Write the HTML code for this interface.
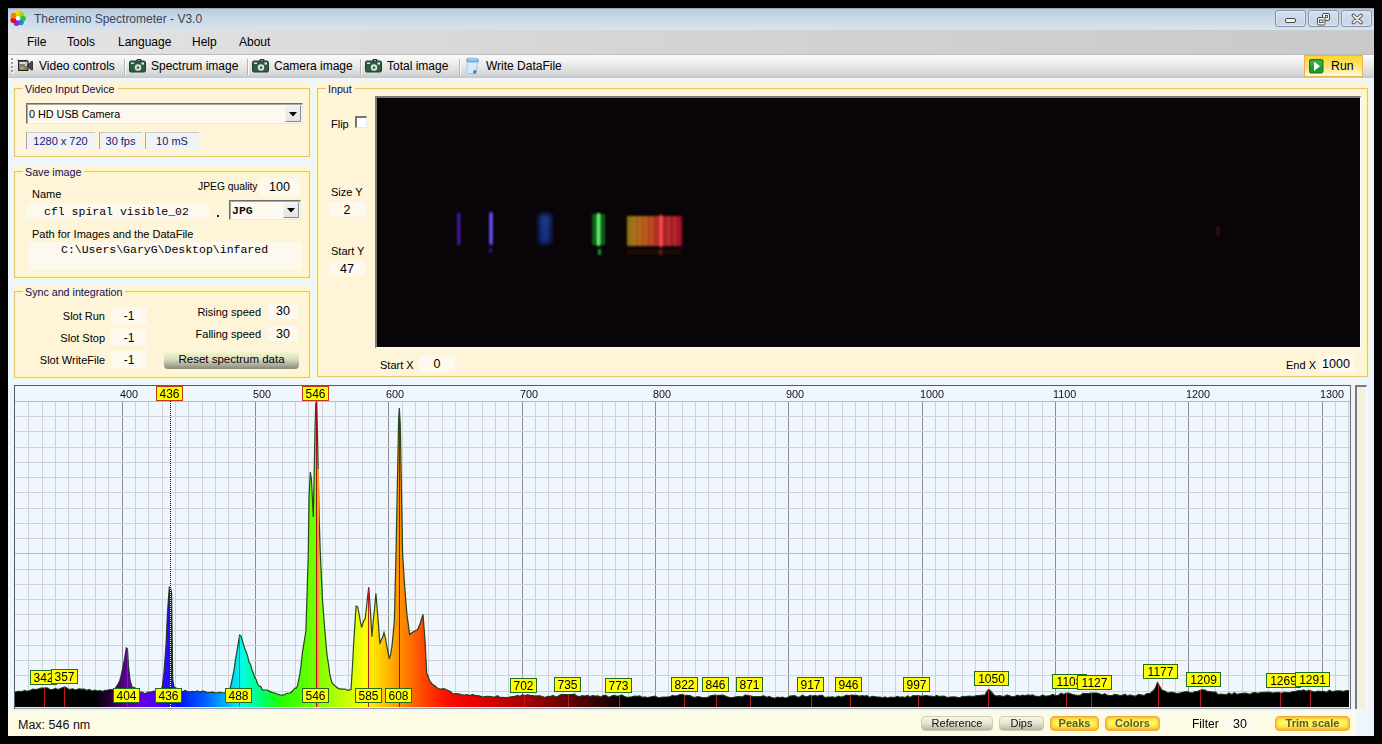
<!DOCTYPE html><html><head><meta charset="utf-8"><style>
*{margin:0;padding:0;box-sizing:border-box}
html,body{width:1382px;height:744px;overflow:hidden;background:#000}
body{position:relative;font-family:"Liberation Sans",sans-serif;font-size:12px;color:#000}
.ab{position:absolute}
.t{position:absolute;white-space:nowrap;line-height:1}
.grp{position:absolute;background:#fef4d8}
.gb{position:absolute;border:1px solid #e2c66c;box-shadow:inset 0 0 0 1px rgba(255,248,160,.7), 0 0 0 1px rgba(255,246,150,.45)}
.gl{position:absolute;background:#fef4d8;color:#100c50;font-size:10.7px;line-height:12px;padding:0 3px 0 2px;white-space:nowrap}
.box{position:absolute;background:#fdf8ea;font-size:12px;line-height:1;white-space:nowrap;text-align:center}
.lbl{position:absolute;font-size:11px;line-height:1;white-space:nowrap;color:#000}
.wb{position:absolute;top:10px;height:17px;width:31px;border:1px solid #8594a8;border-radius:3px;background:linear-gradient(#d6e1ed,#c8d6e5 60%,#ccd9e7);box-shadow:inset 0 0 0 1px rgba(255,255,255,.35)}
.tb{position:absolute;top:60px;font-size:12px;line-height:1;white-space:nowrap;color:#000}
.sep{position:absolute;top:59px;width:1px;height:16px;background:#b4b4b4;box-shadow:1px 0 0 #fff}
.btn{position:absolute;border-radius:4px;font-size:11.5px;line-height:1;text-align:center;white-space:nowrap}
</style></head><body>

<div class="ab" style="left:8px;top:8px;width:1366px;height:728px;background:#eef6fd"></div>
<div class="ab" style="left:8px;top:8px;width:1366px;height:22px;background:linear-gradient(#b9c9da,#c9d7e6 40%,#d6e3f0)"></div>
<div class="ab" style="left:8px;top:8px;width:1366px;height:1px;background:#9aa9b8"></div>
<svg class="ab" style="left:8px;top:8px" width="22" height="22" viewBox="8 8 22 22"><circle cx="17.25" cy="13.26" r="2.9" fill="#ffd800"/><circle cx="21.40" cy="14.53" r="2.9" fill="#9ae010"/><circle cx="22.99" cy="18.57" r="2.9" fill="#34c030"/><circle cx="20.82" cy="22.33" r="2.9" fill="#1a88d0"/><circle cx="16.53" cy="22.98" r="2.9" fill="#8a2ad0"/><circle cx="13.35" cy="20.03" r="2.9" fill="#e01010"/><circle cx="13.67" cy="15.70" r="2.9" fill="#ff7a00"/><circle cx="18" cy="18.2" r="2.3" fill="#f4f8ff"/></svg>
<div class="t" style="left:34px;top:13px;font-size:12px;color:#3b4554">Theremino Spectrometer - V3.0</div>
<div class="wb" style="left:1275px"><div class="ab" style="left:9px;top:7px;width:11px;height:5px;border:1px solid #4a4a4a;border-radius:2px;background:#f4f4f4"></div></div>
<div class="wb" style="left:1308px"><svg class="ab" style="left:8px;top:2px" width="14" height="13" viewBox="0 0 14 13"><rect x="5.5" y="0.5" width="7" height="7" rx="1.5" fill="#f2f2f2" stroke="#4a4a4a"/><rect x="8.5" y="2.5" width="2" height="2" fill="none" stroke="#4a4a4a" stroke-width="0.9"/><rect x="0.5" y="4.5" width="7.5" height="7.5" rx="1.5" fill="#f2f2f2" stroke="#4a4a4a"/><rect x="2.5" y="7" width="3.5" height="2.5" fill="none" stroke="#4a4a4a" stroke-width="0.9"/></svg></div>
<div class="wb" style="left:1341px"><svg class="ab" style="left:9px;top:2px" width="13" height="12" viewBox="0 0 13 12"><path d="M2.5 2.5 L10 9.5 M10 2.5 L2.5 9.5" stroke="#4a4a4a" stroke-width="3.6" stroke-linecap="round"/><path d="M2.5 2.5 L10 9.5 M10 2.5 L2.5 9.5" stroke="#f6f6f6" stroke-width="1.8" stroke-linecap="round"/></svg></div>
<div class="ab" style="left:8px;top:30px;width:1366px;height:25px;background:linear-gradient(90deg,#e4e4e4,#d6d6d6 40%,#c9c9c9);border-bottom:1px solid #bcbcbc"></div>
<div class="t" style="left:27px;top:36px;font-size:12px">File</div>
<div class="t" style="left:67px;top:36px;font-size:12px">Tools</div>
<div class="t" style="left:118px;top:36px;font-size:12px">Language</div>
<div class="t" style="left:192px;top:36px;font-size:12px">Help</div>
<div class="t" style="left:239px;top:36px;font-size:12px">About</div>
<div class="ab" style="left:8px;top:55px;width:1366px;height:23px;background:linear-gradient(#fbfbfb,#f0f0f0 30%,#d9d9d9 80%,#c6c6c6)"></div>
<div class="ab" style="left:11px;top:58px;width:2px;height:2px;background:#9a9a9a;box-shadow:1px 1px 0 #fff"></div>
<div class="ab" style="left:11px;top:62px;width:2px;height:2px;background:#9a9a9a;box-shadow:1px 1px 0 #fff"></div>
<div class="ab" style="left:11px;top:66px;width:2px;height:2px;background:#9a9a9a;box-shadow:1px 1px 0 #fff"></div>
<div class="ab" style="left:11px;top:70px;width:2px;height:2px;background:#9a9a9a;box-shadow:1px 1px 0 #fff"></div>
<svg class="ab" style="left:16px;top:58px" width="18" height="15" viewBox="0 0 18 15"><path d="M1 1.5 L2.5 3.5 L11 3.5 L11 2 L3 2 Z" fill="#2a2a2a"/><rect x="2.5" y="3" width="9.5" height="9.5" fill="#7c7c7c" stroke="#262626" stroke-width="1"/><rect x="3.5" y="4" width="7.5" height="2" fill="#d8d8d8"/><rect x="9" y="5" width="2" height="3" fill="#e8c0c0"/><rect x="4" y="9" width="5" height="2.5" fill="#8a8a3a"/><rect x="4.5" y="9.5" width="3" height="1" fill="#d8d860"/><path d="M12 6.5 L15.5 3.5 L16.5 3.5 L16.5 12 L15.5 12 L12 9 Z" fill="#4a4a4a" stroke="#1e1e1e" stroke-width="0.8"/></svg>
<div class="tb" style="left:39px">Video controls</div>
<div class="sep" style="left:124px"></div>
<svg class="ab" style="left:129px;top:58px" width="18" height="16" viewBox="0 0 18 16"><rect x="7.5" y="1" width="5" height="3" rx="1" fill="#1f3a2a"/><rect x="9" y="2" width="2" height="1" fill="#fff"/><rect x="0.5" y="3" width="16" height="11" rx="1.5" fill="#2d5e43" stroke="#1e3d2c"/><rect x="2" y="4.5" width="3" height="1.5" fill="#cfe6d8"/><rect x="12.5" y="4.5" width="2.5" height="2" fill="#e8f4ec"/><circle cx="9" cy="9.5" r="3.2" fill="#dfe7e0"/><path d="M9 7.8 L10.6 10.6 L7.4 10.6 Z" fill="#1e3d2c"/></svg>
<div class="tb" style="left:151px">Spectrum image</div>
<div class="sep" style="left:247px"></div>
<svg class="ab" style="left:252px;top:58px" width="18" height="16" viewBox="0 0 18 16"><rect x="7.5" y="1" width="5" height="3" rx="1" fill="#1f3a2a"/><rect x="9" y="2" width="2" height="1" fill="#fff"/><rect x="0.5" y="3" width="16" height="11" rx="1.5" fill="#2d5e43" stroke="#1e3d2c"/><rect x="2" y="4.5" width="3" height="1.5" fill="#cfe6d8"/><rect x="12.5" y="4.5" width="2.5" height="2" fill="#e8f4ec"/><circle cx="9" cy="9.5" r="3.2" fill="#dfe7e0"/><path d="M9 7.8 L10.6 10.6 L7.4 10.6 Z" fill="#1e3d2c"/></svg>
<div class="tb" style="left:274px">Camera image</div>
<div class="sep" style="left:360px"></div>
<svg class="ab" style="left:365px;top:58px" width="18" height="16" viewBox="0 0 18 16"><rect x="7.5" y="1" width="5" height="3" rx="1" fill="#1f3a2a"/><rect x="9" y="2" width="2" height="1" fill="#fff"/><rect x="0.5" y="3" width="16" height="11" rx="1.5" fill="#2d5e43" stroke="#1e3d2c"/><rect x="2" y="4.5" width="3" height="1.5" fill="#cfe6d8"/><rect x="12.5" y="4.5" width="2.5" height="2" fill="#e8f4ec"/><circle cx="9" cy="9.5" r="3.2" fill="#dfe7e0"/><path d="M9 7.8 L10.6 10.6 L7.4 10.6 Z" fill="#1e3d2c"/></svg>
<div class="tb" style="left:387px">Total image</div>
<div class="sep" style="left:459px"></div>
<svg class="ab" style="left:464px;top:57px" width="16" height="18" viewBox="0 0 16 18"><path d="M3.5 4 L13.5 4 Q14.5 5 13 8 L12 13 Q11.5 16 9.5 16.5 L3 16.5 Q1.5 16 2.5 14 Q3.5 11 3 8 Q2.5 5.5 3.5 4 Z" fill="#d4eafa" stroke="#8db9dc" stroke-width="0.7"/><path d="M2.5 2.5 Q3 1 5 1 L13 1.5 Q15 2 14.5 4 Q14 5.5 12.5 5 L4 5 Q2 4.5 2.5 2.5 Z" fill="#7fb7e3" stroke="#5b93c6" stroke-width="0.6"/><path d="M4 2 L13 2.5" stroke="#c6e4f8" stroke-width="1"/><path d="M9.5 13 Q12.5 12.5 13 14.5 Q12.5 17 10 17 Q8.5 16 9.5 13 Z" fill="#4f88c2"/></svg>
<div class="tb" style="left:486px">Write DataFile</div>
<div class="ab" style="left:1304px;top:55px;width:59px;height:22px;border:1px solid #e9b24a;background:linear-gradient(#ffd62a,#ffe26a 45%,#fff4c8 90%,#fffbe6)"></div>
<svg class="ab" style="left:1309px;top:59px" width="15" height="15" viewBox="0 0 15 15"><rect x="0.5" y="0.5" width="13.5" height="13.5" rx="1.5" fill="#1e9a30" stroke="#17702a"/><rect x="1.5" y="1.5" width="11.5" height="5" fill="#36b048"/><path d="M5 2.5 L11 7.2 L5 12 Z" fill="#fff"/></svg>
<div class="t" style="left:1331px;top:60px;font-size:12.3px">Run</div>
<div class="grp" style="left:14px;top:82px;width:296px;height:75px"></div>
<div class="gb" style="left:14px;top:88px;width:296px;height:69px"></div>
<div class="gl" style="left:23px;top:84px;line-height:11px">Video Input Device</div>
<div class="grp" style="left:14px;top:165px;width:296px;height:113px"></div>
<div class="gb" style="left:14px;top:171px;width:296px;height:107px"></div>
<div class="gl" style="left:23px;top:167px;line-height:11px">Save image</div>
<div class="grp" style="left:14px;top:285px;width:296px;height:93px"></div>
<div class="gb" style="left:14px;top:291px;width:296px;height:87px"></div>
<div class="gl" style="left:23px;top:287px;line-height:11px">Sync and integration</div>
<div class="grp" style="left:317px;top:82px;width:1051px;height:295px"></div>
<div class="gb" style="left:317px;top:88px;width:1051px;height:289px"></div>
<div class="gl" style="left:326px;top:84px;line-height:11px">Input</div>
<div class="ab" style="left:26px;top:103px;width:277px;height:21px;border:1px solid #6d6d6d;border-right-color:#e8e8e8;border-bottom-color:#e8e8e8;box-shadow:inset 1px 1px 0 #a8a8a8;background:#fdf9ee"></div>
<div class="t" style="left:29px;top:109.1px;font-size:10.8px;color:#000">0 HD USB Camera</div>
<div class="ab" style="left:285px;top:105px;width:16px;height:17px;border:1px solid #8a8a8a;border-top-color:#f4f4f4;border-left-color:#f4f4f4;border-radius:1px;background:linear-gradient(#f2f2f2,#e2e2e2)"></div>
<svg class="ab" style="left:289.0px;top:111.5px" width="8" height="5"><path d="M0 0 L8 0 L4 4.5 Z" fill="#000"/></svg>
<div class="ab" style="left:26px;top:132px;width:69px;height:17px;background:#f1f2f4;border-left:1px solid #a7a7a7;border-top:1px solid #c9c9c9"></div>
<div class="t" style="left:26px;top:136px;width:69px;text-align:center;font-size:11px;color:#151a72">1280 x 720</div>
<div class="ab" style="left:99px;top:132px;width:43px;height:17px;background:#f1f2f4;border-left:1px solid #a7a7a7;border-top:1px solid #c9c9c9"></div>
<div class="t" style="left:99px;top:136px;width:43px;text-align:center;font-size:11px;color:#151a72">30 fps</div>
<div class="ab" style="left:145px;top:132px;width:54px;height:17px;background:#f1f2f4;border-left:1px solid #a7a7a7;border-top:1px solid #c9c9c9"></div>
<div class="t" style="left:145px;top:136px;width:54px;text-align:center;font-size:11px;color:#151a72">10 mS</div>
<div class="lbl" style="left:32px;top:189px">Name</div>
<div class="lbl" style="left:198px;top:182px;font-size:10.3px">JPEG quality</div>
<div class="ab" style="left:259px;top:178px;width:41px;height:18px;background:#fdf9ee"></div>
<div class="t" style="left:259px;top:181.2px;width:41px;text-align:center;font-size:12.5px;">100</div>
<div class="ab" style="left:26px;top:204px;width:183px;height:15px;background:#fdf9ee"></div>
<div class="t" style="left:44px;top:206.2px;width:165px;text-align:left;font-size:11.5px;font-family:'Liberation Mono', monospace;">cfl spiral visible_02</div>
<div class="ab" style="left:216.5px;top:215px;width:2px;height:2px;background:#222"></div>
<div class="ab" style="left:229px;top:200px;width:72px;height:20px;border:1px solid #6d6d6d;border-right-color:#e8e8e8;border-bottom-color:#e8e8e8;box-shadow:inset 1px 1px 0 #a8a8a8;background:#fdf9ee"></div>
<div class="t" style="left:232px;top:205.2px;font-size:11.5px;color:#000"></div>
<div class="ab" style="left:283px;top:202px;width:16px;height:16px;border:1px solid #8a8a8a;border-top-color:#f4f4f4;border-left-color:#f4f4f4;border-radius:1px;background:linear-gradient(#f2f2f2,#e2e2e2)"></div>
<svg class="ab" style="left:287.0px;top:208.0px" width="8" height="5"><path d="M0 0 L8 0 L4 4.5 Z" fill="#000"/></svg>
<div class="t" style="left:232px;top:205px;font-family:'Liberation Mono',monospace;font-weight:bold;font-size:11.5px;color:#111">JPG</div>
<div class="lbl" style="left:32px;top:229px">Path for Images and the DataFile</div>
<div class="ab" style="left:28px;top:242px;width:274px;height:28px;background:#fdf9ee"></div>
<div class="t" style="left:28px;top:250.5px;width:274px;text-align:center;font-size:12px;"></div>
<div class="t" style="left:61px;top:244px;font-family:'Liberation Mono',monospace;font-size:11.5px">C:&#92;Users&#92;GaryG&#92;Desktop&#92;infared</div>
<div class="lbl" style="left:20px;width:85px;text-align:right;top:311px">Slot Run</div>
<div class="ab" style="left:111px;top:307px;width:36px;height:17px;background:#fdf9ee"></div>
<div class="t" style="left:111px;top:310.0px;width:36px;text-align:center;font-size:12px;">-1</div>
<div class="lbl" style="left:20px;width:85px;text-align:right;top:333px">Slot Stop</div>
<div class="ab" style="left:111px;top:329px;width:36px;height:17px;background:#fdf9ee"></div>
<div class="t" style="left:111px;top:332.0px;width:36px;text-align:center;font-size:12px;">-1</div>
<div class="lbl" style="left:20px;width:85px;text-align:right;top:355px">Slot WriteFile</div>
<div class="ab" style="left:111px;top:351px;width:36px;height:17px;background:#fdf9ee"></div>
<div class="t" style="left:111px;top:354.0px;width:36px;text-align:center;font-size:12px;">-1</div>
<div class="lbl" style="left:160px;width:101px;text-align:right;top:307px">Rising speed</div>
<div class="ab" style="left:268px;top:303px;width:30px;height:16px;background:#fdf9ee"></div>
<div class="t" style="left:268px;top:305.2px;width:30px;text-align:center;font-size:12.5px;">30</div>
<div class="lbl" style="left:160px;width:101px;text-align:right;top:329px">Falling speed</div>
<div class="ab" style="left:268px;top:326px;width:30px;height:15px;background:#fdf9ee"></div>
<div class="t" style="left:268px;top:327.8px;width:30px;text-align:center;font-size:12.5px;">30</div>
<div class="btn" style="left:164px;top:351px;width:135px;height:18px;background:linear-gradient(#f6fccc,#dcdcc4 45%,#8c887a);padding-top:3px;font-size:11.5px">Reset spectrum data</div>
<div class="lbl" style="left:331px;top:119px">Flip</div>
<div class="ab" style="left:355px;top:116px;width:12px;height:12px;border-top:2px solid #747474;border-left:2px solid #747474;border-right:1px solid #e8e8e8;border-bottom:1px solid #e8e8e8;background:#fff"></div>
<div class="lbl" style="left:331px;top:187px">Size Y</div>
<div class="ab" style="left:329px;top:202px;width:36px;height:15px;background:#fdf9ee"></div>
<div class="t" style="left:329px;top:203.8px;width:36px;text-align:center;font-size:12.5px;">2</div>
<div class="lbl" style="left:331px;top:246px">Start Y</div>
<div class="ab" style="left:329px;top:261px;width:36px;height:15px;background:#fdf9ee"></div>
<div class="t" style="left:329px;top:262.8px;width:36px;text-align:center;font-size:12.5px;">47</div>
<div class="lbl" style="left:380px;top:360px">Start X</div>
<div class="ab" style="left:419px;top:356px;width:36px;height:16px;background:#fdf9ee"></div>
<div class="t" style="left:419px;top:358.2px;width:36px;text-align:center;font-size:12.5px;">0</div>
<div class="lbl" style="left:1286px;top:360px">End X</div>
<div class="ab" style="left:1318px;top:356px;width:36px;height:16px;background:#fdf9ee"></div>
<div class="t" style="left:1318px;top:358.2px;width:36px;text-align:center;font-size:12.5px;">1000</div>
<div class="ab" style="left:375px;top:96px;width:986px;height:252px;background:#090407;border-top:2px solid #7d7a70;border-left:2px solid #7d7a70;border-right:1px solid #fff;border-bottom:1px solid #fff"></div>
<svg class="ab" style="left:377px;top:98px" width="983" height="249" viewBox="377 98 983 249"><defs><filter id="bl" x="-50%" y="-50%" width="200%" height="200%"><feGaussianBlur stdDeviation="1.3"/></filter><filter id="bl2" x="-50%" y="-50%" width="200%" height="200%"><feGaussianBlur stdDeviation="2.5"/></filter><linearGradient id="og" x1="626" x2="682" gradientUnits="userSpaceOnUse"><stop offset="0" stop-color="#8a7a10"/><stop offset="0.3" stop-color="#b05818"/><stop offset="0.65" stop-color="#b02028"/><stop offset="1" stop-color="#a01028"/></linearGradient><linearGradient id="bg2" x1="0" x2="0" y1="213" y2="245" gradientUnits="userSpaceOnUse"><stop offset="0" stop-color="#2050c0"/><stop offset="1" stop-color="#1838a0"/></linearGradient></defs><g filter="url(#bl)"><rect x="457.3" y="213" width="3" height="32" fill="#5020c8" opacity="0.9"/><rect x="489.3" y="212" width="3.4" height="33" fill="#5a40ff"/><rect x="490.2" y="214" width="1.6" height="29" fill="#7a68ff"/><rect x="489" y="248" width="3" height="5" fill="#2a1a80"/><rect x="598" y="249" width="3" height="6" fill="#18a030"/><rect x="659" y="249" width="3" height="6" fill="#902020" opacity="0.8"/><rect x="1216" y="226" width="4" height="10" fill="#401018" opacity="0.7"/><rect x="592" y="214" width="13" height="31" fill="#0f7a22" opacity="0.8"/><rect x="597" y="213" width="3" height="33" fill="#50ff60"/><rect x="598" y="215" width="1.2" height="29" fill="#80ff80"/><rect x="627" y="216" width="55" height="30" fill="url(#og)"/><rect x="627" y="249" width="55" height="6" fill="#502010" opacity="0.25"/><rect x="633" y="216" width="1.5" height="30" fill="#ffb060" opacity="0.25"/><rect x="639" y="216" width="1.5" height="30" fill="#ffb060" opacity="0.25"/><rect x="645" y="216" width="1.5" height="30" fill="#ffb060" opacity="0.25"/><rect x="651" y="216" width="1.5" height="30" fill="#ffb060" opacity="0.25"/><rect x="668" y="216" width="1.5" height="30" fill="#ffb060" opacity="0.25"/><rect x="674" y="216" width="1.5" height="30" fill="#ffb060" opacity="0.25"/><rect x="659.5" y="215" width="3" height="32" fill="#ff5050"/></g><rect x="539" y="214" width="12" height="30" fill="url(#bg2)" opacity="0.75" filter="url(#bl2)"/></svg>
<div class="ab" style="left:14px;top:385px;width:1337px;height:324px;background:#f0f6fd;border:1px solid #5c5c5c;border-bottom-color:#9c9c9c;border-right-color:#6c6c6c"></div>
<div class="ab" style="left:1355px;top:385px;width:12px;height:324px;background:#f3f1de;border-left:2px solid #7a7a7a;border-top:2px solid #7a7a7a;border-right:1px solid #fff"></div>
<div class="ab" style="left:8px;top:711px;width:1348px;height:25px;background:#fdfbe4"></div>
<div class="t" style="left:18px;top:719px;font-size:12.5px;color:#111">Max: 546 nm</div>
<svg class="ab" style="left:0;top:0" width="1382" height="744" viewBox="0 0 1382 744"><defs><linearGradient id="spec" x1="0" x2="1382" y1="0" y2="0" gradientUnits="userSpaceOnUse"><stop offset="0.0687" stop-color="#000000"/><stop offset="0.0796" stop-color="#2a0038"/><stop offset="0.0904" stop-color="#5a0090"/><stop offset="0.1013" stop-color="#6400d8"/><stop offset="0.1143" stop-color="#4a00ff"/><stop offset="0.1288" stop-color="#0010ff"/><stop offset="0.1483" stop-color="#0060ff"/><stop offset="0.1628" stop-color="#00b0ff"/><stop offset="0.1751" stop-color="#00ffe8"/><stop offset="0.1896" stop-color="#00ff70"/><stop offset="0.2026" stop-color="#20ff00"/><stop offset="0.2171" stop-color="#50ff00"/><stop offset="0.2388" stop-color="#a0ff00"/><stop offset="0.2569" stop-color="#e0ff00"/><stop offset="0.2648" stop-color="#ffff00"/><stop offset="0.2750" stop-color="#ffd000"/><stop offset="0.2894" stop-color="#ff9000"/><stop offset="0.3039" stop-color="#ff5000"/><stop offset="0.3220" stop-color="#ff1000"/><stop offset="0.3401" stop-color="#f00000"/><stop offset="0.3763" stop-color="#b00000"/><stop offset="0.4052" stop-color="#700000"/><stop offset="0.4342" stop-color="#300000"/><stop offset="0.4501" stop-color="#0a0000"/><stop offset="0.4559" stop-color="#000000"/></linearGradient></defs><g shape-rendering="crispEdges"><line x1="28.5" y1="401" x2="28.5" y2="707" stroke="#cdd1d6"/><line x1="42.5" y1="401" x2="42.5" y2="707" stroke="#cdd1d6"/><line x1="55.5" y1="401" x2="55.5" y2="707" stroke="#cdd1d6"/><line x1="68.5" y1="401" x2="68.5" y2="707" stroke="#cdd1d6"/><line x1="82.5" y1="401" x2="82.5" y2="707" stroke="#cdd1d6"/><line x1="95.5" y1="401" x2="95.5" y2="707" stroke="#cdd1d6"/><line x1="108.5" y1="401" x2="108.5" y2="707" stroke="#cdd1d6"/><line x1="122.5" y1="401" x2="122.5" y2="707" stroke="#8b8f95"/><line x1="135.5" y1="401" x2="135.5" y2="707" stroke="#cdd1d6"/><line x1="148.5" y1="401" x2="148.5" y2="707" stroke="#cdd1d6"/><line x1="162.5" y1="401" x2="162.5" y2="707" stroke="#cdd1d6"/><line x1="175.5" y1="401" x2="175.5" y2="707" stroke="#cdd1d6"/><line x1="188.5" y1="401" x2="188.5" y2="707" stroke="#cdd1d6"/><line x1="202.5" y1="401" x2="202.5" y2="707" stroke="#cdd1d6"/><line x1="215.5" y1="401" x2="215.5" y2="707" stroke="#cdd1d6"/><line x1="228.5" y1="401" x2="228.5" y2="707" stroke="#cdd1d6"/><line x1="242.5" y1="401" x2="242.5" y2="707" stroke="#cdd1d6"/><line x1="255.5" y1="401" x2="255.5" y2="707" stroke="#8b8f95"/><line x1="268.5" y1="401" x2="268.5" y2="707" stroke="#cdd1d6"/><line x1="282.5" y1="401" x2="282.5" y2="707" stroke="#cdd1d6"/><line x1="295.5" y1="401" x2="295.5" y2="707" stroke="#cdd1d6"/><line x1="308.5" y1="401" x2="308.5" y2="707" stroke="#cdd1d6"/><line x1="322.5" y1="401" x2="322.5" y2="707" stroke="#cdd1d6"/><line x1="335.5" y1="401" x2="335.5" y2="707" stroke="#cdd1d6"/><line x1="348.5" y1="401" x2="348.5" y2="707" stroke="#cdd1d6"/><line x1="362.5" y1="401" x2="362.5" y2="707" stroke="#cdd1d6"/><line x1="375.5" y1="401" x2="375.5" y2="707" stroke="#cdd1d6"/><line x1="388.5" y1="401" x2="388.5" y2="707" stroke="#8b8f95"/><line x1="402.5" y1="401" x2="402.5" y2="707" stroke="#cdd1d6"/><line x1="415.5" y1="401" x2="415.5" y2="707" stroke="#cdd1d6"/><line x1="428.5" y1="401" x2="428.5" y2="707" stroke="#cdd1d6"/><line x1="442.5" y1="401" x2="442.5" y2="707" stroke="#cdd1d6"/><line x1="455.5" y1="401" x2="455.5" y2="707" stroke="#cdd1d6"/><line x1="468.5" y1="401" x2="468.5" y2="707" stroke="#cdd1d6"/><line x1="482.5" y1="401" x2="482.5" y2="707" stroke="#cdd1d6"/><line x1="495.5" y1="401" x2="495.5" y2="707" stroke="#cdd1d6"/><line x1="508.5" y1="401" x2="508.5" y2="707" stroke="#cdd1d6"/><line x1="522.5" y1="401" x2="522.5" y2="707" stroke="#8b8f95"/><line x1="535.5" y1="401" x2="535.5" y2="707" stroke="#cdd1d6"/><line x1="548.5" y1="401" x2="548.5" y2="707" stroke="#cdd1d6"/><line x1="562.5" y1="401" x2="562.5" y2="707" stroke="#cdd1d6"/><line x1="575.5" y1="401" x2="575.5" y2="707" stroke="#cdd1d6"/><line x1="588.5" y1="401" x2="588.5" y2="707" stroke="#cdd1d6"/><line x1="602.5" y1="401" x2="602.5" y2="707" stroke="#cdd1d6"/><line x1="615.5" y1="401" x2="615.5" y2="707" stroke="#cdd1d6"/><line x1="628.5" y1="401" x2="628.5" y2="707" stroke="#cdd1d6"/><line x1="642.5" y1="401" x2="642.5" y2="707" stroke="#cdd1d6"/><line x1="655.5" y1="401" x2="655.5" y2="707" stroke="#8b8f95"/><line x1="668.5" y1="401" x2="668.5" y2="707" stroke="#cdd1d6"/><line x1="682.5" y1="401" x2="682.5" y2="707" stroke="#cdd1d6"/><line x1="695.5" y1="401" x2="695.5" y2="707" stroke="#cdd1d6"/><line x1="708.5" y1="401" x2="708.5" y2="707" stroke="#cdd1d6"/><line x1="722.5" y1="401" x2="722.5" y2="707" stroke="#cdd1d6"/><line x1="735.5" y1="401" x2="735.5" y2="707" stroke="#cdd1d6"/><line x1="748.5" y1="401" x2="748.5" y2="707" stroke="#cdd1d6"/><line x1="762.5" y1="401" x2="762.5" y2="707" stroke="#cdd1d6"/><line x1="775.5" y1="401" x2="775.5" y2="707" stroke="#cdd1d6"/><line x1="788.5" y1="401" x2="788.5" y2="707" stroke="#8b8f95"/><line x1="802.5" y1="401" x2="802.5" y2="707" stroke="#cdd1d6"/><line x1="815.5" y1="401" x2="815.5" y2="707" stroke="#cdd1d6"/><line x1="828.5" y1="401" x2="828.5" y2="707" stroke="#cdd1d6"/><line x1="842.5" y1="401" x2="842.5" y2="707" stroke="#cdd1d6"/><line x1="855.5" y1="401" x2="855.5" y2="707" stroke="#cdd1d6"/><line x1="868.5" y1="401" x2="868.5" y2="707" stroke="#cdd1d6"/><line x1="882.5" y1="401" x2="882.5" y2="707" stroke="#cdd1d6"/><line x1="895.5" y1="401" x2="895.5" y2="707" stroke="#cdd1d6"/><line x1="908.5" y1="401" x2="908.5" y2="707" stroke="#cdd1d6"/><line x1="922.5" y1="401" x2="922.5" y2="707" stroke="#8b8f95"/><line x1="935.5" y1="401" x2="935.5" y2="707" stroke="#cdd1d6"/><line x1="948.5" y1="401" x2="948.5" y2="707" stroke="#cdd1d6"/><line x1="962.5" y1="401" x2="962.5" y2="707" stroke="#cdd1d6"/><line x1="975.5" y1="401" x2="975.5" y2="707" stroke="#cdd1d6"/><line x1="988.5" y1="401" x2="988.5" y2="707" stroke="#cdd1d6"/><line x1="1002.5" y1="401" x2="1002.5" y2="707" stroke="#cdd1d6"/><line x1="1015.5" y1="401" x2="1015.5" y2="707" stroke="#cdd1d6"/><line x1="1028.5" y1="401" x2="1028.5" y2="707" stroke="#cdd1d6"/><line x1="1042.5" y1="401" x2="1042.5" y2="707" stroke="#cdd1d6"/><line x1="1055.5" y1="401" x2="1055.5" y2="707" stroke="#8b8f95"/><line x1="1068.5" y1="401" x2="1068.5" y2="707" stroke="#cdd1d6"/><line x1="1082.5" y1="401" x2="1082.5" y2="707" stroke="#cdd1d6"/><line x1="1095.5" y1="401" x2="1095.5" y2="707" stroke="#cdd1d6"/><line x1="1108.5" y1="401" x2="1108.5" y2="707" stroke="#cdd1d6"/><line x1="1122.5" y1="401" x2="1122.5" y2="707" stroke="#cdd1d6"/><line x1="1135.5" y1="401" x2="1135.5" y2="707" stroke="#cdd1d6"/><line x1="1148.5" y1="401" x2="1148.5" y2="707" stroke="#cdd1d6"/><line x1="1162.5" y1="401" x2="1162.5" y2="707" stroke="#cdd1d6"/><line x1="1175.5" y1="401" x2="1175.5" y2="707" stroke="#cdd1d6"/><line x1="1188.5" y1="401" x2="1188.5" y2="707" stroke="#8b8f95"/><line x1="1202.5" y1="401" x2="1202.5" y2="707" stroke="#cdd1d6"/><line x1="1215.5" y1="401" x2="1215.5" y2="707" stroke="#cdd1d6"/><line x1="1228.5" y1="401" x2="1228.5" y2="707" stroke="#cdd1d6"/><line x1="1242.5" y1="401" x2="1242.5" y2="707" stroke="#cdd1d6"/><line x1="1255.5" y1="401" x2="1255.5" y2="707" stroke="#cdd1d6"/><line x1="1268.5" y1="401" x2="1268.5" y2="707" stroke="#cdd1d6"/><line x1="1282.5" y1="401" x2="1282.5" y2="707" stroke="#cdd1d6"/><line x1="1295.5" y1="401" x2="1295.5" y2="707" stroke="#cdd1d6"/><line x1="1308.5" y1="401" x2="1308.5" y2="707" stroke="#cdd1d6"/><line x1="1322.5" y1="401" x2="1322.5" y2="707" stroke="#8b8f95"/><line x1="1335.5" y1="401" x2="1335.5" y2="707" stroke="#cdd1d6"/><line x1="1348.5" y1="401" x2="1348.5" y2="707" stroke="#cdd1d6"/><line x1="15" y1="416.5" x2="1350" y2="416.5" stroke="#cfd3d8"/><line x1="15" y1="431.5" x2="1350" y2="431.5" stroke="#cfd3d8"/><line x1="15" y1="447.5" x2="1350" y2="447.5" stroke="#cfd3d8"/><line x1="15" y1="462.5" x2="1350" y2="462.5" stroke="#cfd3d8"/><line x1="15" y1="477.5" x2="1350" y2="477.5" stroke="#cfd3d8"/><line x1="15" y1="492.5" x2="1350" y2="492.5" stroke="#cfd3d8"/><line x1="15" y1="508.5" x2="1350" y2="508.5" stroke="#cfd3d8"/><line x1="15" y1="523.5" x2="1350" y2="523.5" stroke="#cfd3d8"/><line x1="15" y1="538.5" x2="1350" y2="538.5" stroke="#cfd3d8"/><line x1="15" y1="553.5" x2="1350" y2="553.5" stroke="#a8ca8c"/><line x1="15" y1="569.5" x2="1350" y2="569.5" stroke="#cfd3d8"/><line x1="15" y1="584.5" x2="1350" y2="584.5" stroke="#cfd3d8"/><line x1="15" y1="599.5" x2="1350" y2="599.5" stroke="#cfd3d8"/><line x1="15" y1="614.5" x2="1350" y2="614.5" stroke="#cfd3d8"/><line x1="15" y1="630.5" x2="1350" y2="630.5" stroke="#cfd3d8"/><line x1="15" y1="645.5" x2="1350" y2="645.5" stroke="#cfd3d8"/><line x1="15" y1="660.5" x2="1350" y2="660.5" stroke="#cfd3d8"/><line x1="15" y1="675.5" x2="1350" y2="675.5" stroke="#cfd3d8"/><line x1="15" y1="691.5" x2="1350" y2="691.5" stroke="#cfd3d8"/><line x1="15" y1="401.5" x2="1350" y2="401.5" stroke="#a8ca8c"/></g><text x="120" y="398" font-family="Liberation Sans" font-size="10.8" fill="#111">400</text><text x="253" y="398" font-family="Liberation Sans" font-size="10.8" fill="#111">500</text><text x="386" y="398" font-family="Liberation Sans" font-size="10.8" fill="#111">600</text><text x="520" y="398" font-family="Liberation Sans" font-size="10.8" fill="#111">700</text><text x="653" y="398" font-family="Liberation Sans" font-size="10.8" fill="#111">800</text><text x="786" y="398" font-family="Liberation Sans" font-size="10.8" fill="#111">900</text><text x="920" y="398" font-family="Liberation Sans" font-size="10.8" fill="#111">1000</text><text x="1053" y="398" font-family="Liberation Sans" font-size="10.8" fill="#111">1100</text><text x="1186" y="398" font-family="Liberation Sans" font-size="10.8" fill="#111">1200</text><text x="1320" y="398" font-family="Liberation Sans" font-size="10.8" fill="#111">1300</text><path d="M15 707 L15.0 692.0 L18.5 691.4 L22.0 691.5 L24.7 690.4 L27.3 691.2 L30.0 690.5 L32.7 689.1 L35.3 689.6 L38.0 689.0 L41.0 688.2 L44.0 688.0 L47.0 687.8 L50.0 689.5 L52.7 689.5 L55.3 688.5 L58.0 689.5 L61.5 688.1 L65.0 687.0 L69.0 689.5 L72.5 688.8 L76.0 690.0 L78.7 688.8 L81.3 689.2 L84.0 689.0 L86.7 690.4 L89.3 689.5 L92.0 691.0 L94.7 690.2 L97.3 690.9 L100.0 690.5 L102.7 691.3 L105.3 690.3 L108.0 690.0 L110.5 689.5 L113.0 689.5 L115.5 688.0 L118.0 684.0 L119.5 681.4 L121.0 676.0 L123.0 667.0 L125.0 656.0 L126.3 648.0 L127.5 649.0 L128.5 666.0 L130.0 680.0 L132.0 687.0 L134.5 687.5 L137.0 690.0 L139.7 692.1 L142.3 692.2 L145.0 694.0 L147.9 692.2 L150.8 692.0 L153.9 691.2 L157.0 692.0 L160.0 691.0 L162.2 687.0 L164.0 672.0 L166.0 645.0 L167.5 612.0 L169.3 587.0 L170.5 587.5 L171.6 593.0 L172.2 640.0 L172.7 679.0 L174.0 687.0 L177.0 688.6 L180.0 691.0 L182.5 691.8 L185.0 690.5 L187.5 691.6 L190.0 691.8 L192.5 691.3 L195.0 691.9 L197.5 690.9 L200.0 692.0 L202.6 691.1 L205.1 691.6 L207.7 692.7 L210.2 692.3 L212.8 692.1 L215.3 692.9 L217.9 692.7 L220.4 692.4 L223.0 693.0 L226.0 692.6 L229.0 691.0 L230.5 687.0 L232.2 679.1 L234.0 670.0 L235.5 659.7 L237.0 651.0 L238.3 643.2 L239.6 635.0 L241.0 636.0 L242.3 640.1 L243.6 645.1 L244.9 648.7 L246.2 652.0 L247.6 655.9 L249.1 662.4 L250.6 664.4 L252.0 670.0 L253.4 673.3 L254.8 677.8 L256.2 679.5 L257.6 684.0 L259.2 686.0 L260.8 686.6 L262.4 690.0 L267.0 690.0 L269.7 691.4 L272.3 692.6 L275.0 693.0 L277.6 694.2 L280.3 695.0 L283.5 695.2 L286.8 693.3 L290.0 693.0 L291.2 692.4 L292.5 690.9 L293.7 689.7 L294.9 688.2 L296.2 688.2 L297.4 686.0 L299.7 675.0 L301.1 664.8 L302.5 652.0 L304.2 641.4 L305.9 631.0 L307.1 592.5 L308.3 553.0 L309.0 498.0 L310.3 472.0 L311.5 480.0 L313.3 517.0 L315.0 430.0 L315.8 403.0 L316.8 403.0 L318.2 468.0 L319.2 520.0 L320.3 553.0 L322.5 600.0 L324.9 631.0 L327.0 655.0 L328.4 663.7 L329.9 675.0 L332.0 683.0 L335.3 686.2 L338.6 688.6 L341.8 689.1 L345.0 689.0 L348.0 690.3 L351.0 689.5 L352.4 667.2 L353.7 643.0 L354.9 623.9 L356.1 606.0 L357.7 607.0 L359.0 613.5 L360.3 621.2 L361.6 627.5 L363.4 621.6 L365.2 618.5 L366.4 608.0 L367.6 596.6 L368.8 587.2 L370.4 610.8 L371.9 636.6 L373.2 620.8 L374.6 608.5 L375.9 593.3 L377.2 609.0 L378.6 626.1 L379.9 643.7 L381.3 639.7 L382.6 637.4 L384.0 632.6 L385.4 637.9 L386.7 645.5 L388.0 652.4 L389.4 658.8 L390.7 653.6 L392.0 646.0 L394.4 620.5 L396.0 553.0 L397.3 487.5 L398.6 420.0 L399.3 408.0 L400.3 425.0 L402.6 553.0 L404.5 584.0 L405.8 600.6 L407.0 615.0 L408.3 624.1 L409.6 634.6 L413.0 632.0 L417.6 629.6 L420.0 624.0 L421.5 618.9 L423.0 614.4 L425.0 640.0 L426.7 672.9 L428.2 676.5 L429.7 681.0 L432.4 684.3 L435.0 686.0 L437.9 688.5 L440.8 689.0 L443.9 688.7 L447.0 690.0 L449.9 691.3 L452.9 694.0 L455.8 693.7 L458.6 693.9 L461.4 694.7 L464.3 695.2 L467.1 694.7 L470.0 695.5 L472.5 694.5 L475.0 695.6 L477.5 695.6 L480.0 696.1 L482.5 697.1 L485.0 696.7 L487.5 696.4 L490.0 696.5 L492.5 696.8 L495.0 697.0 L497.5 695.7 L500.0 697.6 L502.5 697.4 L505.0 697.7 L507.5 697.6 L510.0 697.0 L512.5 696.5 L515.0 696.3 L517.5 695.4 L520.0 696.3 L522.5 694.8 L525.0 695.5 L527.5 694.8 L530.0 695.4 L532.5 695.5 L535.0 696.1 L537.5 695.8 L540.0 695.9 L542.5 696.5 L545.0 697.5 L547.7 696.3 L550.3 696.5 L553.0 695.5 L555.7 697.0 L558.3 696.1 L561.0 694.7 L563.7 694.6 L566.3 694.5 L569.0 694.5 L571.6 694.5 L574.2 694.2 L576.9 696.0 L579.5 696.6 L582.1 695.7 L584.8 696.0 L587.4 695.3 L590.0 696.5 L592.6 695.6 L595.3 696.1 L597.9 695.8 L600.5 697.0 L603.2 695.5 L605.8 695.2 L608.5 697.2 L611.1 696.2 L613.7 695.3 L616.4 696.1 L619.0 696.0 L621.6 695.0 L624.2 696.2 L626.8 697.3 L629.3 697.1 L631.9 696.8 L634.5 696.0 L637.1 696.3 L639.7 695.9 L642.2 697.3 L644.8 696.9 L647.4 697.5 L650.0 697.0 L652.5 696.5 L655.0 696.2 L657.5 697.4 L660.0 697.6 L662.5 697.2 L665.0 697.0 L667.5 697.0 L670.0 696.7 L672.5 695.4 L675.0 696.0 L677.5 695.5 L680.0 694.7 L682.5 694.6 L685.0 695.5 L687.5 695.3 L690.0 695.5 L692.5 696.7 L695.0 697.5 L697.5 696.6 L700.0 697.0 L702.6 697.7 L705.1 697.6 L707.7 697.4 L710.3 695.8 L712.9 695.3 L715.4 695.1 L718.0 695.5 L720.8 695.1 L723.7 695.3 L726.5 696.5 L729.3 697.4 L732.2 697.5 L735.0 697.0 L737.6 696.7 L740.2 696.7 L742.8 696.8 L745.4 694.9 L748.0 695.5 L750.7 696.0 L753.3 696.7 L756.0 696.6 L758.7 696.7 L761.3 696.3 L764.0 695.8 L766.7 697.3 L769.3 696.5 L772.0 697.7 L774.7 698.2 L777.3 697.1 L780.0 697.5 L782.5 697.1 L785.0 698.1 L787.5 697.5 L790.0 696.1 L792.5 695.8 L795.0 695.7 L797.5 697.2 L800.0 696.8 L802.5 695.2 L805.0 696.6 L807.5 696.7 L810.0 695.5 L812.5 696.0 L815.0 695.5 L817.5 696.2 L820.0 695.4 L822.5 695.4 L825.0 697.7 L827.5 697.1 L830.0 697.0 L832.7 696.8 L835.4 697.5 L838.1 696.2 L840.9 697.0 L843.6 696.6 L846.3 695.1 L849.0 695.5 L851.6 695.1 L854.2 695.3 L856.8 695.3 L859.3 696.2 L861.9 695.6 L864.5 696.1 L867.1 695.6 L869.7 697.4 L872.2 696.3 L874.8 696.7 L877.4 697.1 L880.0 697.0 L882.5 697.9 L885.0 696.9 L887.5 698.1 L890.0 697.2 L892.5 697.3 L895.0 697.4 L897.5 696.3 L900.0 697.3 L902.5 696.8 L905.0 697.5 L907.6 696.0 L910.2 697.4 L912.8 695.6 L915.4 695.8 L918.0 695.5 L920.7 696.1 L923.3 695.9 L926.0 695.5 L928.7 696.0 L931.3 696.2 L934.0 696.9 L936.7 695.5 L939.3 696.6 L942.0 696.1 L944.7 696.3 L947.3 697.5 L950.0 697.0 L952.5 696.9 L955.0 696.9 L957.5 697.3 L960.0 697.5 L962.5 696.4 L965.0 696.6 L967.5 696.3 L970.0 696.2 L972.5 696.5 L975.0 696.0 L977.5 695.6 L980.0 695.6 L982.5 695.2 L985.0 695.0 L987.5 690.5 L989.0 689.5 L990.5 691.0 L994.0 695.0 L996.6 696.1 L999.2 695.6 L1001.8 696.1 L1004.4 696.4 L1007.0 695.0 L1009.6 695.7 L1012.2 696.7 L1014.8 696.5 L1017.4 695.1 L1020.0 696.0 L1022.5 695.1 L1025.0 695.8 L1027.5 694.9 L1030.0 695.3 L1032.5 694.9 L1035.0 696.1 L1037.5 696.3 L1040.0 696.5 L1042.5 694.9 L1045.0 696.1 L1047.5 695.9 L1050.0 695.5 L1052.8 694.3 L1055.5 695.5 L1058.3 695.3 L1061.1 693.2 L1063.8 694.4 L1066.6 693.0 L1069.4 693.4 L1072.2 694.3 L1075.0 695.0 L1077.8 695.7 L1080.6 695.1 L1083.3 693.3 L1086.1 693.5 L1088.9 693.4 L1091.7 693.0 L1094.3 693.0 L1096.9 693.0 L1099.5 693.7 L1102.2 694.9 L1104.8 693.7 L1107.4 695.3 L1110.0 695.5 L1112.5 695.3 L1115.0 694.3 L1117.5 694.9 L1120.0 695.5 L1122.5 695.2 L1125.0 694.2 L1127.5 696.1 L1130.0 695.0 L1132.8 695.7 L1135.6 696.2 L1138.4 694.4 L1141.2 694.9 L1144.0 695.5 L1147.0 693.5 L1150.0 693.5 L1154.0 690.0 L1155.7 687.2 L1157.4 682.7 L1159.5 686.0 L1161.8 690.0 L1164.9 691.0 L1168.0 693.0 L1170.9 692.0 L1173.8 692.5 L1176.7 693.5 L1179.6 693.1 L1182.5 692.3 L1185.0 691.8 L1187.5 691.7 L1190.0 692.5 L1192.5 692.9 L1195.0 691.6 L1197.5 691.4 L1200.0 690.4 L1202.5 689.8 L1205.0 690.0 L1207.5 691.6 L1210.0 691.5 L1212.7 692.0 L1215.4 691.9 L1218.1 694.5 L1220.8 694.2 L1223.5 694.4 L1226.3 694.7 L1229.0 693.0 L1231.8 694.6 L1234.5 692.7 L1237.3 694.4 L1240.0 693.5 L1242.5 693.4 L1245.1 693.1 L1247.6 693.5 L1250.2 694.3 L1252.7 692.8 L1255.2 692.5 L1257.8 693.3 L1260.3 692.6 L1262.8 692.3 L1265.4 692.4 L1267.9 692.1 L1270.5 692.4 L1273.0 693.0 L1275.8 692.5 L1278.7 692.4 L1281.5 693.3 L1284.3 692.2 L1287.2 692.6 L1290.0 692.5 L1292.7 691.5 L1295.4 691.6 L1298.1 690.5 L1300.9 690.8 L1303.6 689.9 L1306.3 691.2 L1309.0 690.4 L1312.0 691.3 L1315.0 692.0 L1318.0 691.1 L1321.0 691.5 L1323.8 691.3 L1326.6 692.3 L1329.4 690.3 L1332.2 691.8 L1335.0 691.0 L1337.8 690.8 L1340.6 690.9 L1343.4 691.6 L1346.2 690.5 L1349.0 690.7 L1349 707 Z" fill="url(#spec)"/><path d="M15.0 692.0 L18.5 691.4 L22.0 691.5 L24.7 690.4 L27.3 691.2 L30.0 690.5 L32.7 689.1 L35.3 689.6 L38.0 689.0 L41.0 688.2 L44.0 688.0 L47.0 687.8 L50.0 689.5 L52.7 689.5 L55.3 688.5 L58.0 689.5 L61.5 688.1 L65.0 687.0 L69.0 689.5 L72.5 688.8 L76.0 690.0 L78.7 688.8 L81.3 689.2 L84.0 689.0 L86.7 690.4 L89.3 689.5 L92.0 691.0 L94.7 690.2 L97.3 690.9 L100.0 690.5 L102.7 691.3 L105.3 690.3 L108.0 690.0 L110.5 689.5 L113.0 689.5 L115.5 688.0 L118.0 684.0 L119.5 681.4 L121.0 676.0 L123.0 667.0 L125.0 656.0 L126.3 648.0 L127.5 649.0 L128.5 666.0 L130.0 680.0 L132.0 687.0 L134.5 687.5 L137.0 690.0 L139.7 692.1 L142.3 692.2 L145.0 694.0 L147.9 692.2 L150.8 692.0 L153.9 691.2 L157.0 692.0 L160.0 691.0 L162.2 687.0 L164.0 672.0 L166.0 645.0 L167.5 612.0 L169.3 587.0 L170.5 587.5 L171.6 593.0 L172.2 640.0 L172.7 679.0 L174.0 687.0 L177.0 688.6 L180.0 691.0 L182.5 691.8 L185.0 690.5 L187.5 691.6 L190.0 691.8 L192.5 691.3 L195.0 691.9 L197.5 690.9 L200.0 692.0 L202.6 691.1 L205.1 691.6 L207.7 692.7 L210.2 692.3 L212.8 692.1 L215.3 692.9 L217.9 692.7 L220.4 692.4 L223.0 693.0 L226.0 692.6 L229.0 691.0 L230.5 687.0 L232.2 679.1 L234.0 670.0 L235.5 659.7 L237.0 651.0 L238.3 643.2 L239.6 635.0 L241.0 636.0 L242.3 640.1 L243.6 645.1 L244.9 648.7 L246.2 652.0 L247.6 655.9 L249.1 662.4 L250.6 664.4 L252.0 670.0 L253.4 673.3 L254.8 677.8 L256.2 679.5 L257.6 684.0 L259.2 686.0 L260.8 686.6 L262.4 690.0 L267.0 690.0 L269.7 691.4 L272.3 692.6 L275.0 693.0 L277.6 694.2 L280.3 695.0 L283.5 695.2 L286.8 693.3 L290.0 693.0 L291.2 692.4 L292.5 690.9 L293.7 689.7 L294.9 688.2 L296.2 688.2 L297.4 686.0 L299.7 675.0 L301.1 664.8 L302.5 652.0 L304.2 641.4 L305.9 631.0 L307.1 592.5 L308.3 553.0 L309.0 498.0 L310.3 472.0 L311.5 480.0 L313.3 517.0 L315.0 430.0 L315.8 403.0 L316.8 403.0 L318.2 468.0 L319.2 520.0 L320.3 553.0 L322.5 600.0 L324.9 631.0 L327.0 655.0 L328.4 663.7 L329.9 675.0 L332.0 683.0 L335.3 686.2 L338.6 688.6 L341.8 689.1 L345.0 689.0 L348.0 690.3 L351.0 689.5 L352.4 667.2 L353.7 643.0 L354.9 623.9 L356.1 606.0 L357.7 607.0 L359.0 613.5 L360.3 621.2 L361.6 627.5 L363.4 621.6 L365.2 618.5 L366.4 608.0 L367.6 596.6 L368.8 587.2 L370.4 610.8 L371.9 636.6 L373.2 620.8 L374.6 608.5 L375.9 593.3 L377.2 609.0 L378.6 626.1 L379.9 643.7 L381.3 639.7 L382.6 637.4 L384.0 632.6 L385.4 637.9 L386.7 645.5 L388.0 652.4 L389.4 658.8 L390.7 653.6 L392.0 646.0 L394.4 620.5 L396.0 553.0 L397.3 487.5 L398.6 420.0 L399.3 408.0 L400.3 425.0 L402.6 553.0 L404.5 584.0 L405.8 600.6 L407.0 615.0 L408.3 624.1 L409.6 634.6 L413.0 632.0 L417.6 629.6 L420.0 624.0 L421.5 618.9 L423.0 614.4 L425.0 640.0 L426.7 672.9 L428.2 676.5 L429.7 681.0 L432.4 684.3 L435.0 686.0 L437.9 688.5 L440.8 689.0 L443.9 688.7 L447.0 690.0 L449.9 691.3 L452.9 694.0 L455.8 693.7 L458.6 693.9 L461.4 694.7 L464.3 695.2 L467.1 694.7 L470.0 695.5 L472.5 694.5 L475.0 695.6 L477.5 695.6 L480.0 696.1 L482.5 697.1 L485.0 696.7 L487.5 696.4 L490.0 696.5 L492.5 696.8 L495.0 697.0 L497.5 695.7 L500.0 697.6 L502.5 697.4 L505.0 697.7 L507.5 697.6 L510.0 697.0 L512.5 696.5 L515.0 696.3 L517.5 695.4 L520.0 696.3 L522.5 694.8 L525.0 695.5 L527.5 694.8 L530.0 695.4 L532.5 695.5 L535.0 696.1 L537.5 695.8 L540.0 695.9 L542.5 696.5 L545.0 697.5 L547.7 696.3 L550.3 696.5 L553.0 695.5 L555.7 697.0 L558.3 696.1 L561.0 694.7 L563.7 694.6 L566.3 694.5 L569.0 694.5 L571.6 694.5 L574.2 694.2 L576.9 696.0 L579.5 696.6 L582.1 695.7 L584.8 696.0 L587.4 695.3 L590.0 696.5 L592.6 695.6 L595.3 696.1 L597.9 695.8 L600.5 697.0 L603.2 695.5 L605.8 695.2 L608.5 697.2 L611.1 696.2 L613.7 695.3 L616.4 696.1 L619.0 696.0 L621.6 695.0 L624.2 696.2 L626.8 697.3 L629.3 697.1 L631.9 696.8 L634.5 696.0 L637.1 696.3 L639.7 695.9 L642.2 697.3 L644.8 696.9 L647.4 697.5 L650.0 697.0 L652.5 696.5 L655.0 696.2 L657.5 697.4 L660.0 697.6 L662.5 697.2 L665.0 697.0 L667.5 697.0 L670.0 696.7 L672.5 695.4 L675.0 696.0 L677.5 695.5 L680.0 694.7 L682.5 694.6 L685.0 695.5 L687.5 695.3 L690.0 695.5 L692.5 696.7 L695.0 697.5 L697.5 696.6 L700.0 697.0 L702.6 697.7 L705.1 697.6 L707.7 697.4 L710.3 695.8 L712.9 695.3 L715.4 695.1 L718.0 695.5 L720.8 695.1 L723.7 695.3 L726.5 696.5 L729.3 697.4 L732.2 697.5 L735.0 697.0 L737.6 696.7 L740.2 696.7 L742.8 696.8 L745.4 694.9 L748.0 695.5 L750.7 696.0 L753.3 696.7 L756.0 696.6 L758.7 696.7 L761.3 696.3 L764.0 695.8 L766.7 697.3 L769.3 696.5 L772.0 697.7 L774.7 698.2 L777.3 697.1 L780.0 697.5 L782.5 697.1 L785.0 698.1 L787.5 697.5 L790.0 696.1 L792.5 695.8 L795.0 695.7 L797.5 697.2 L800.0 696.8 L802.5 695.2 L805.0 696.6 L807.5 696.7 L810.0 695.5 L812.5 696.0 L815.0 695.5 L817.5 696.2 L820.0 695.4 L822.5 695.4 L825.0 697.7 L827.5 697.1 L830.0 697.0 L832.7 696.8 L835.4 697.5 L838.1 696.2 L840.9 697.0 L843.6 696.6 L846.3 695.1 L849.0 695.5 L851.6 695.1 L854.2 695.3 L856.8 695.3 L859.3 696.2 L861.9 695.6 L864.5 696.1 L867.1 695.6 L869.7 697.4 L872.2 696.3 L874.8 696.7 L877.4 697.1 L880.0 697.0 L882.5 697.9 L885.0 696.9 L887.5 698.1 L890.0 697.2 L892.5 697.3 L895.0 697.4 L897.5 696.3 L900.0 697.3 L902.5 696.8 L905.0 697.5 L907.6 696.0 L910.2 697.4 L912.8 695.6 L915.4 695.8 L918.0 695.5 L920.7 696.1 L923.3 695.9 L926.0 695.5 L928.7 696.0 L931.3 696.2 L934.0 696.9 L936.7 695.5 L939.3 696.6 L942.0 696.1 L944.7 696.3 L947.3 697.5 L950.0 697.0 L952.5 696.9 L955.0 696.9 L957.5 697.3 L960.0 697.5 L962.5 696.4 L965.0 696.6 L967.5 696.3 L970.0 696.2 L972.5 696.5 L975.0 696.0 L977.5 695.6 L980.0 695.6 L982.5 695.2 L985.0 695.0 L987.5 690.5 L989.0 689.5 L990.5 691.0 L994.0 695.0 L996.6 696.1 L999.2 695.6 L1001.8 696.1 L1004.4 696.4 L1007.0 695.0 L1009.6 695.7 L1012.2 696.7 L1014.8 696.5 L1017.4 695.1 L1020.0 696.0 L1022.5 695.1 L1025.0 695.8 L1027.5 694.9 L1030.0 695.3 L1032.5 694.9 L1035.0 696.1 L1037.5 696.3 L1040.0 696.5 L1042.5 694.9 L1045.0 696.1 L1047.5 695.9 L1050.0 695.5 L1052.8 694.3 L1055.5 695.5 L1058.3 695.3 L1061.1 693.2 L1063.8 694.4 L1066.6 693.0 L1069.4 693.4 L1072.2 694.3 L1075.0 695.0 L1077.8 695.7 L1080.6 695.1 L1083.3 693.3 L1086.1 693.5 L1088.9 693.4 L1091.7 693.0 L1094.3 693.0 L1096.9 693.0 L1099.5 693.7 L1102.2 694.9 L1104.8 693.7 L1107.4 695.3 L1110.0 695.5 L1112.5 695.3 L1115.0 694.3 L1117.5 694.9 L1120.0 695.5 L1122.5 695.2 L1125.0 694.2 L1127.5 696.1 L1130.0 695.0 L1132.8 695.7 L1135.6 696.2 L1138.4 694.4 L1141.2 694.9 L1144.0 695.5 L1147.0 693.5 L1150.0 693.5 L1154.0 690.0 L1155.7 687.2 L1157.4 682.7 L1159.5 686.0 L1161.8 690.0 L1164.9 691.0 L1168.0 693.0 L1170.9 692.0 L1173.8 692.5 L1176.7 693.5 L1179.6 693.1 L1182.5 692.3 L1185.0 691.8 L1187.5 691.7 L1190.0 692.5 L1192.5 692.9 L1195.0 691.6 L1197.5 691.4 L1200.0 690.4 L1202.5 689.8 L1205.0 690.0 L1207.5 691.6 L1210.0 691.5 L1212.7 692.0 L1215.4 691.9 L1218.1 694.5 L1220.8 694.2 L1223.5 694.4 L1226.3 694.7 L1229.0 693.0 L1231.8 694.6 L1234.5 692.7 L1237.3 694.4 L1240.0 693.5 L1242.5 693.4 L1245.1 693.1 L1247.6 693.5 L1250.2 694.3 L1252.7 692.8 L1255.2 692.5 L1257.8 693.3 L1260.3 692.6 L1262.8 692.3 L1265.4 692.4 L1267.9 692.1 L1270.5 692.4 L1273.0 693.0 L1275.8 692.5 L1278.7 692.4 L1281.5 693.3 L1284.3 692.2 L1287.2 692.6 L1290.0 692.5 L1292.7 691.5 L1295.4 691.6 L1298.1 690.5 L1300.9 690.8 L1303.6 689.9 L1306.3 691.2 L1309.0 690.4 L1312.0 691.3 L1315.0 692.0 L1318.0 691.1 L1321.0 691.5 L1323.8 691.3 L1326.6 692.3 L1329.4 690.3 L1332.2 691.8 L1335.0 691.0 L1337.8 690.8 L1340.6 690.9 L1343.4 691.6 L1346.2 690.5 L1349.0 690.7" fill="none" stroke="#123612" stroke-width="1.2" stroke-opacity="0.9"/><rect x="317" y="469" width="2" height="238" fill="#f0a020"/><line x1="44.5" y1="687.9" x2="44.5" y2="707" stroke="#b81c1c" stroke-width="1"/><line x1="64.5" y1="687.0" x2="64.5" y2="707" stroke="#b81c1c" stroke-width="1"/><line x1="127.5" y1="648.2" x2="127.5" y2="707" stroke="#b81c1c" stroke-width="1"/><line x1="316.5" y1="401.0" x2="316.5" y2="707" stroke="#a01010" stroke-width="1"/><line x1="368.5" y1="589.6" x2="368.5" y2="707" stroke="#b81c1c" stroke-width="1"/><line x1="399.5" y1="408.0" x2="399.5" y2="707" stroke="#a01010" stroke-width="1"/><line x1="524.5" y1="694.9" x2="524.5" y2="707" stroke="#b81c1c" stroke-width="1"/><line x1="568.5" y1="694.5" x2="568.5" y2="707" stroke="#b81c1c" stroke-width="1"/><line x1="619.5" y1="695.3" x2="619.5" y2="707" stroke="#b81c1c" stroke-width="1"/><line x1="684.5" y1="694.8" x2="684.5" y2="707" stroke="#b81c1c" stroke-width="1"/><line x1="716.5" y1="695.1" x2="716.5" y2="707" stroke="#b81c1c" stroke-width="1"/><line x1="750.5" y1="695.7" x2="750.5" y2="707" stroke="#b81c1c" stroke-width="1"/><line x1="811.5" y1="695.5" x2="811.5" y2="707" stroke="#b81c1c" stroke-width="1"/><line x1="850.5" y1="695.1" x2="850.5" y2="707" stroke="#b81c1c" stroke-width="1"/><line x1="918.5" y1="695.5" x2="918.5" y2="707" stroke="#b81c1c" stroke-width="1"/><line x1="988.5" y1="689.5" x2="988.5" y2="707" stroke="#b81c1c" stroke-width="1"/><line x1="1066.5" y1="693.1" x2="1066.5" y2="707" stroke="#b81c1c" stroke-width="1"/><line x1="1091.5" y1="693.0" x2="1091.5" y2="707" stroke="#b81c1c" stroke-width="1"/><line x1="1158.5" y1="682.9" x2="1158.5" y2="707" stroke="#b81c1c" stroke-width="1"/><line x1="1200.5" y1="689.9" x2="1200.5" y2="707" stroke="#b81c1c" stroke-width="1"/><line x1="1280.5" y1="692.5" x2="1280.5" y2="707" stroke="#b81c1c" stroke-width="1"/><line x1="1310.5" y1="690.4" x2="1310.5" y2="707" stroke="#b81c1c" stroke-width="1"/><line x1="239.5" y1="636" x2="239.5" y2="707" stroke="#5a6a70" stroke-width="1"/><line x1="170.5" y1="401" x2="170.5" y2="707" stroke="#fff" stroke-width="1"/><line x1="170.5" y1="401" x2="170.5" y2="707" stroke="#000" stroke-width="1" stroke-dasharray="1 1"/><rect x="15" y="707" width="1335" height="1" fill="#f2eef4"/></svg>
<div class="ab" style="left:30px;top:670px;width:27px;height:15px;background:#ffff00;border:1px solid #1f6e1f;font-size:12px;line-height:13px;padding-top:1px;text-align:center;color:#000;white-space:nowrap;overflow:hidden">342</div>
<div class="ab" style="left:51px;top:669px;width:27px;height:15px;background:#ffff00;border:1px solid #1f6e1f;font-size:12px;line-height:13px;padding-top:1px;text-align:center;color:#000;white-space:nowrap;overflow:hidden">357</div>
<div class="ab" style="left:113px;top:688px;width:27px;height:15px;background:#ffff00;border:1px solid #1f6e1f;font-size:12px;line-height:13px;padding-top:1px;text-align:center;color:#000;white-space:nowrap;overflow:hidden">404</div>
<div class="ab" style="left:155px;top:688px;width:27px;height:15px;background:#ffff00;border:1px solid #1f6e1f;font-size:12px;line-height:13px;padding-top:1px;text-align:center;color:#000;white-space:nowrap;overflow:hidden">436</div>
<div class="ab" style="left:225px;top:688px;width:27px;height:15px;background:#ffff00;border:1px solid #1f6e1f;font-size:12px;line-height:13px;padding-top:1px;text-align:center;color:#000;white-space:nowrap;overflow:hidden">488</div>
<div class="ab" style="left:302px;top:688px;width:27px;height:15px;background:#ffff00;border:1px solid #1f6e1f;font-size:12px;line-height:13px;padding-top:1px;text-align:center;color:#000;white-space:nowrap;overflow:hidden">546</div>
<div class="ab" style="left:355px;top:688px;width:27px;height:15px;background:#ffff00;border:1px solid #1f6e1f;font-size:12px;line-height:13px;padding-top:1px;text-align:center;color:#000;white-space:nowrap;overflow:hidden">585</div>
<div class="ab" style="left:385px;top:688px;width:27px;height:15px;background:#ffff00;border:1px solid #1f6e1f;font-size:12px;line-height:13px;padding-top:1px;text-align:center;color:#000;white-space:nowrap;overflow:hidden">608</div>
<div class="ab" style="left:510px;top:678px;width:27px;height:15px;background:#ffff00;border:1px solid #1f6e1f;font-size:12px;line-height:13px;padding-top:1px;text-align:center;color:#000;white-space:nowrap;overflow:hidden">702</div>
<div class="ab" style="left:554px;top:677px;width:27px;height:15px;background:#ffff00;border:1px solid #1f6e1f;font-size:12px;line-height:13px;padding-top:1px;text-align:center;color:#000;white-space:nowrap;overflow:hidden">735</div>
<div class="ab" style="left:605px;top:678px;width:27px;height:15px;background:#ffff00;border:1px solid #1f6e1f;font-size:12px;line-height:13px;padding-top:1px;text-align:center;color:#000;white-space:nowrap;overflow:hidden">773</div>
<div class="ab" style="left:671px;top:677px;width:27px;height:15px;background:#ffff00;border:1px solid #1f6e1f;font-size:12px;line-height:13px;padding-top:1px;text-align:center;color:#000;white-space:nowrap;overflow:hidden">822</div>
<div class="ab" style="left:702px;top:677px;width:27px;height:15px;background:#ffff00;border:1px solid #1f6e1f;font-size:12px;line-height:13px;padding-top:1px;text-align:center;color:#000;white-space:nowrap;overflow:hidden">846</div>
<div class="ab" style="left:736px;top:677px;width:27px;height:15px;background:#ffff00;border:1px solid #1f6e1f;font-size:12px;line-height:13px;padding-top:1px;text-align:center;color:#000;white-space:nowrap;overflow:hidden">871</div>
<div class="ab" style="left:797px;top:677px;width:27px;height:15px;background:#ffff00;border:1px solid #1f6e1f;font-size:12px;line-height:13px;padding-top:1px;text-align:center;color:#000;white-space:nowrap;overflow:hidden">917</div>
<div class="ab" style="left:835px;top:677px;width:27px;height:15px;background:#ffff00;border:1px solid #1f6e1f;font-size:12px;line-height:13px;padding-top:1px;text-align:center;color:#000;white-space:nowrap;overflow:hidden">946</div>
<div class="ab" style="left:903px;top:677px;width:27px;height:15px;background:#ffff00;border:1px solid #1f6e1f;font-size:12px;line-height:13px;padding-top:1px;text-align:center;color:#000;white-space:nowrap;overflow:hidden">997</div>
<div class="ab" style="left:974px;top:671px;width:35px;height:15px;background:#ffff00;border:1px solid #1f6e1f;font-size:12px;line-height:13px;padding-top:1px;text-align:center;color:#000;white-space:nowrap;overflow:hidden">1050</div>
<div class="ab" style="left:1052px;top:674px;width:35px;height:15px;background:#ffff00;border:1px solid #1f6e1f;font-size:12px;line-height:13px;padding-top:1px;text-align:center;color:#000;white-space:nowrap;overflow:hidden">1108</div>
<div class="ab" style="left:1077px;top:675px;width:35px;height:15px;background:#ffff00;border:1px solid #1f6e1f;font-size:12px;line-height:13px;padding-top:1px;text-align:center;color:#000;white-space:nowrap;overflow:hidden">1127</div>
<div class="ab" style="left:1143px;top:664px;width:35px;height:15px;background:#ffff00;border:1px solid #1f6e1f;font-size:12px;line-height:13px;padding-top:1px;text-align:center;color:#000;white-space:nowrap;overflow:hidden">1177</div>
<div class="ab" style="left:1186px;top:672px;width:35px;height:15px;background:#ffff00;border:1px solid #1f6e1f;font-size:12px;line-height:13px;padding-top:1px;text-align:center;color:#000;white-space:nowrap;overflow:hidden">1209</div>
<div class="ab" style="left:1266px;top:673px;width:35px;height:15px;background:#ffff00;border:1px solid #1f6e1f;font-size:12px;line-height:13px;padding-top:1px;text-align:center;color:#000;white-space:nowrap;overflow:hidden">1269</div>
<div class="ab" style="left:1295px;top:672px;width:35px;height:15px;background:#ffff00;border:1px solid #1f6e1f;font-size:12px;line-height:13px;padding-top:1px;text-align:center;color:#000;white-space:nowrap;overflow:hidden">1291</div>
<div class="ab" style="left:156px;top:386px;width:27px;height:15px;background:#ffff00;border:1px solid #c23a10;font-size:12px;line-height:13px;padding-top:1px;text-align:center;color:#000;white-space:nowrap;overflow:hidden">436</div>
<div class="ab" style="left:302px;top:386px;width:27px;height:15px;background:#ffff00;border:1px solid #c23a10;font-size:12px;line-height:13px;padding-top:1px;text-align:center;color:#000;white-space:nowrap;overflow:hidden">546</div>
<div class="btn" style="left:921px;top:716px;width:72px;height:15px;background:linear-gradient(#f8f8e8,#e4e4d0 50%,#b8b4a0);border:1px solid #d0ccb8;font-size:11px;padding-top:0.5px;color:#111">Reference</div>
<div class="btn" style="left:999px;top:716px;width:45px;height:15px;background:linear-gradient(#f8f8e8,#e4e4d0 50%,#b8b4a0);border:1px solid #d0ccb8;font-size:11px;padding-top:0.5px;color:#111">Dips</div>
<div class="btn" style="left:1050px;top:716px;width:49px;height:15px;background:linear-gradient(#ffe850,#fff860 45%,#ffe848 75%,#f8c030);box-shadow:inset 0 0 3px 1px #f8b020;border:1px solid #f0a840;font-size:11px;padding-top:0.5px;color:#565a3c;font-weight:bold">Peaks</div>
<div class="btn" style="left:1105px;top:716px;width:55px;height:15px;background:linear-gradient(#ffe850,#fff860 45%,#ffe848 75%,#f8c030);box-shadow:inset 0 0 3px 1px #f8b020;border:1px solid #f0a840;font-size:11px;padding-top:0.5px;color:#565a3c;font-weight:bold">Colors</div>
<div class="t" style="left:1192px;top:718px;font-size:12px">Filter</div>
<div class="ab" style="left:1223px;top:716px;width:34px;height:15px;background:#fdf9ee"></div>
<div class="t" style="left:1223px;top:717.8px;width:34px;text-align:center;font-size:12.5px;">30</div>
<div class="btn" style="left:1275px;top:716px;width:75px;height:15px;background:linear-gradient(#ffe850,#fff860 45%,#ffe848 75%,#f8c030);box-shadow:inset 0 0 3px 1px #f8b020;border:1px solid #f0a840;font-size:11px;padding-top:0.5px;color:#565a3c;font-weight:bold">Trim scale</div>
</body></html>
